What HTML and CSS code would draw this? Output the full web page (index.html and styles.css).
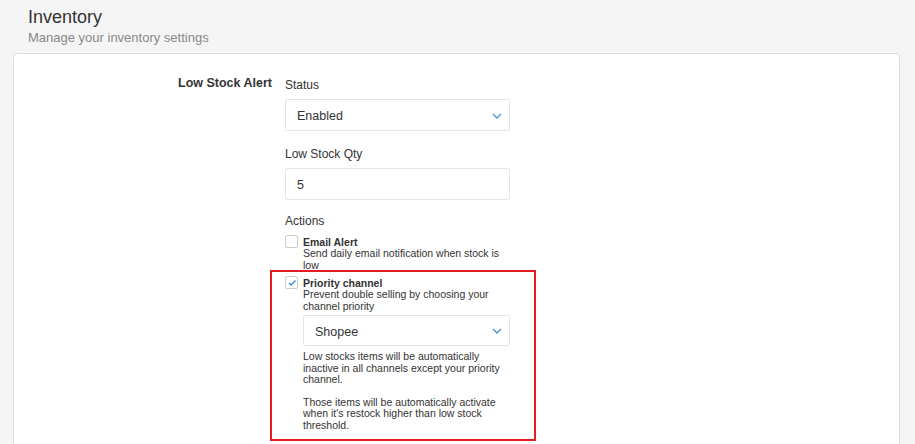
FILE: index.html
```html
<!DOCTYPE html>
<html>
<head>
<meta charset="utf-8">
<link rel="stylesheet" href="styles.css">
</head>
<body>
<div class="page">
  <div class="header">
    <h1 class="title">Inventory</h1>
    <div class="subtitle">Manage your inventory settings</div>
  </div>
  <div class="card">
    <div class="row">
      <div class="row-label">Low Stock Alert</div>
      <div class="fields">
        <div class="field">
          <div class="label">Status</div>
          <div class="select">
            <span>Enabled</span>
            <svg class="chev" width="10" height="6" viewBox="0 0 10 6"><path d="M1 1 L5 5 L9 1" fill="none" stroke="#4a90d9" stroke-width="1.3"/></svg>
          </div>
        </div>
        <div class="field">
          <div class="label">Low Stock Qty</div>
          <div class="input">5</div>
        </div>
        <div class="field">
          <div class="label">Actions</div>
          <div class="check-item">
            <span class="box"></span>
            <div class="check-body">
              <div class="check-title">Email Alert</div>
              <div class="check-desc">Send daily email notification when stock is low</div>
            </div>
          </div>
          <div class="highlight">
            <div class="check-item">
              <span class="box">
                <svg width="10" height="10" viewBox="0 0 10 10"><path d="M2 5 L4.2 7 L8.5 2.5" fill="none" stroke="#3d8fd8" stroke-width="1.4"/></svg>
              </span>
              <div class="check-body">
                <div class="check-title">Priority channel</div>
                <div class="check-desc">Prevent double selling by choosing your channel priority</div>
                <div class="select sub">
                  <span>Shopee</span>
                  <svg class="chev" width="10" height="6" viewBox="0 0 10 6"><path d="M1 1 L5 5 L9 1" fill="none" stroke="#4a90d9" stroke-width="1.3"/></svg>
                </div>
                <p class="note">Low stocks items will be automatically inactive in all channels except your priority channel.</p>
                <p class="note">Those items will be automatically activate when it's restock higher than low stock threshold.</p>
              </div>
            </div>
          </div>
        </div>
      </div>
    </div>
  </div>
</div>
</body>
</html>
```
FILE: styles.css
```css
* { box-sizing: border-box; }
html, body { margin: 0; padding: 0; }
body {
  background: #f5f5f5;
  font-family: "Liberation Sans", Arial, sans-serif;
  color: #333;
  width: 915px;
  height: 444px;
  overflow: hidden;
}
.page { padding: 0 15px 0 13px; }
.header { padding: 6px 0 0 15px; height: 53px; }
.title {
  margin: 0;
  font-size: 18px;
  font-weight: normal;
  line-height: 22px;
  color: #333;
}
.subtitle {
  font-size: 13px;
  line-height: 16px;
  margin-top: 2px;
  color: #888;
}
.card {
  background: #fff;
  border: 1px solid #ddd;
  border-radius: 4px;
  height: 420px;
  padding-top: 20px;
}
.row { display: flex; }
.row-label {
  width: 270px;
  text-align: right;
  font-weight: bold;
  font-size: 12.5px;
  line-height: 18px;
  color: #333;
  padding-right: 12px;
}
.fields { width: 225px; margin-left: 1px; }
.field { margin-bottom: 13px; }
.field:first-child { margin-bottom: 15px; }
.label {
  font-size: 12px;
  line-height: 16px;
  margin-top: 3px;
  margin-bottom: 6px;
  color: #333;
}
.select, .input {
  height: 32px;
  border: 1px solid #e5e5e5;
  border-radius: 2px;
  font-size: 12.5px;
  color: #333;
  padding: 2px 7px 0 11px;
  display: flex;
  align-items: center;
  justify-content: space-between;
  background: #fff;
}
.chev { display: block; margin-top: -1px; }
.check-item { display: flex; align-items: flex-start; }
.box {
  width: 13px;
  height: 13px;
  border: 1px solid #ccc;
  border-radius: 2px;
  flex: none;
  margin-top: 0;
  margin-right: 5px;
  display: flex;
  align-items: center;
  justify-content: center;
  background: #fff;
}
.box svg { display: block; }
.check-body { flex: 1; padding-top: 1px; }
.check-title {
  font-weight: bold;
  font-size: 10.5px;
  line-height: 12px;
  color: #333;
}
.check-desc, .note {
  font-size: 10.5px;
  line-height: 11.5px;
  color: #333;
}
.highlight {
  border: 2px solid #e31b23;
  margin: -1px -26px 0 -15px;
  padding: 4px 24px 8px 13px;
}
.select.sub { margin-top: 3px; height: 31px; }
.note { margin: 5px 0 0; }
.note + .note { margin-top: 11px; }
```
